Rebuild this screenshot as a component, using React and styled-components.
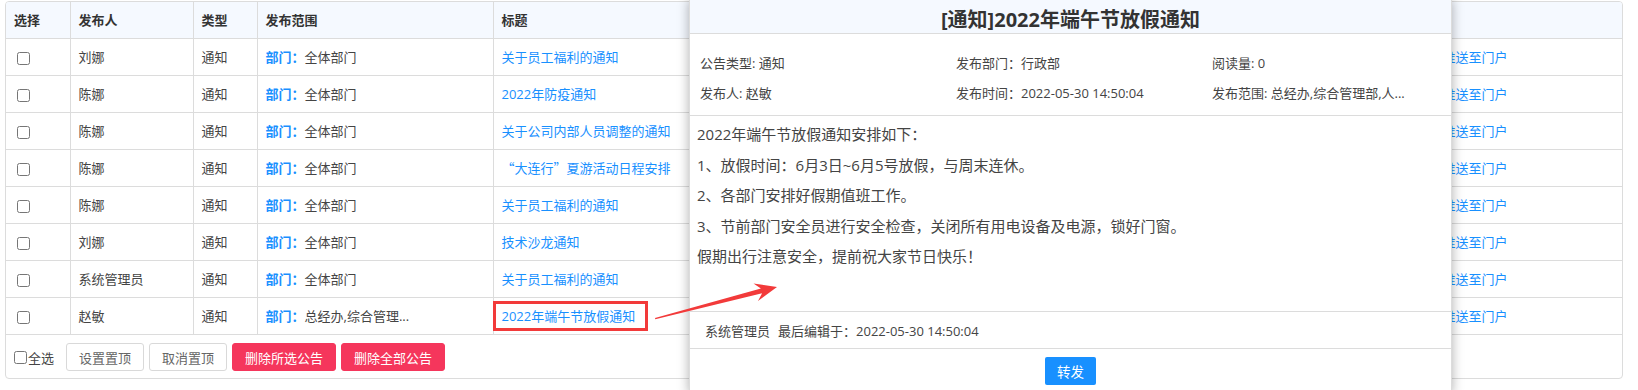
import styled, { createGlobalStyle } from "styled-components";

const GlobalStyle = createGlobalStyle`
  html, body {
    margin: 0;
    padding: 0;
    overflow: hidden;
    background: #fff;
    font-family: "Open Sans", "Noto Sans CJK SC", sans-serif;
    color: #444;
  }
`;

const Page = styled.div`
  position: relative;
  width: 1638px;
  height: 390px;
  padding: 1px 0 0 5px;
  box-sizing: border-box;
  overflow: hidden;
`;

const Panel = styled.div`
  width: 1618px;
  box-sizing: border-box;
  border: 1px solid #dcdcdc;
  border-radius: 4px;
  overflow: hidden;
`;

const Table = styled.table`
  width: 100%;
  border-collapse: collapse;
  table-layout: fixed;
  font-size: 13px;

  th,
  td {
    height: 36px;
    padding: 0 8px;
    border: 1px solid #dcdcdc;
    text-align: left;
    white-space: nowrap;
    overflow: hidden;
    line-height: 18px;
  }

  tr > *:first-child {
    border-left: none;
  }
  tr > *:last-child {
    border-right: none;
  }
  thead th {
    border-top: none;
  }
`;

const HeadRow = styled.tr`
  background: #f5f9ff;

  th {
    font-weight: bold;
    color: #333;
  }
`;

const Check = styled.input.attrs({ type: "checkbox" })`
  width: 13px;
  height: 13px;
  margin: 0 0 0 3px;
  vertical-align: middle;
`;

const Scope = styled.span`
  color: #1890ff;
  font-weight: bold;
`;

const Link = styled.a`
  color: #1890ff;
  text-decoration: none;
  cursor: pointer;
`;

const CjkMark = styled.span`
  font-family: "Noto Sans CJK SC", sans-serif;
`;

const Toolbar = styled.div`
  display: flex;
  align-items: center;
  gap: 5px;
  padding: 8px 8px 7px;
  font-size: 13px;
`;

const SelectAll = styled.label`
  display: flex;
  align-items: center;
  margin-right: 7px;
  color: #444;

  input {
    margin: 0 1px 0 0;
  }
`;

const Button = styled.button`
  height: 28px;
  padding: 0 12px;
  font-family: inherit;
  font-size: 13px;
  border-radius: 3px;
  cursor: pointer;
  border: 1px solid ${(p) => (p.$danger ? "#f5365c" : "#d9d9d9")};
  background: ${(p) => (p.$danger ? "#f5365c" : "#fff")};
  color: ${(p) => (p.$danger ? "#fff" : "#666")};
`;

const Highlight = styled.div`
  position: absolute;
  left: 493px;
  top: 301px;
  width: 155px;
  height: 30px;
  box-sizing: border-box;
  border: 3px solid #f23a3a;
  pointer-events: none;
`;

const Arrow = styled.svg`
  position: absolute;
  left: 0;
  top: 0;
  z-index: 3;
  pointer-events: none;
`;

const Modal = styled.div`
  position: absolute;
  left: 689px;
  top: 0;
  z-index: 2;
  width: 763px;
  box-sizing: border-box;
  background: #fff;
  border: 1px solid #dcdcdc;
  border-top: none;
  box-shadow: 0 0 11px rgba(0, 0, 0, 0.32);
  color: #444;
`;

const ModalTitle = styled.div`
  height: 34px;
  padding-top: 3px;
  box-sizing: border-box;
  display: flex;
  align-items: center;
  justify-content: center;
  background: #f5f9ff;
  border-bottom: 1px solid #dcdcdc;
  font-size: 20px;
  font-weight: bold;
  color: #333;
`;

const InfoGrid = styled.div`
  display: grid;
  grid-template-columns: 256px 256px 1fr;
  grid-auto-rows: 30px;
  align-items: center;
  padding: 13px 0 8px 10px;
  font-size: 13px;
  border-bottom: 1px solid #dcdcdc;
`;

const Content = styled.div`
  height: 196px;
  box-sizing: border-box;
  padding: 7px 7px;
  font-size: 15px;
  border-bottom: 1px solid #dcdcdc;

  p {
    margin: 0 0 8px;
    line-height: 22.5px;
  }
`;

const Footer = styled.div`
  height: 36px;
  display: flex;
  align-items: center;
  padding-left: 15px;
  font-size: 13px;
  border-bottom: 1px solid #dcdcdc;

  span + span {
    margin-left: 8px;
  }
`;

const Actions = styled.div`
  display: flex;
  justify-content: center;
  padding: 8px 0;
`;

const Forward = styled.button`
  height: 28px;
  padding: 0 12px;
  border: none;
  border-radius: 2px;
  background: #1890ff;
  color: #fff;
  font-family: inherit;
  font-size: 13.5px;
`;

const rows = [
  { name: "刘娜", scope: "全体部门", title: "关于员工福利的通知" },
  { name: "陈娜", scope: "全体部门", title: "2022年防疫通知" },
  { name: "陈娜", scope: "全体部门", title: "关于公司内部人员调整的通知" },
  { name: "陈娜", scope: "全体部门", title: "“大连行”夏游活动日程安排" },
  { name: "陈娜", scope: "全体部门", title: "关于员工福利的通知" },
  { name: "刘娜", scope: "全体部门", title: "技术沙龙通知" },
  { name: "系统管理员", scope: "全体部门", title: "关于员工福利的通知" },
  { name: "赵敏", scope: "总经办,综合管理...", title: "2022年端午节放假通知" },
];

// curly quotes take the full-width CJK glyphs, as in the original page
const Title = ({ text }) =>
  text.split(/([“”])/).map((part, i) =>
    part === "“" || part === "”" ? <CjkMark key={i}>{part}</CjkMark> : part
  );

// the columns under the dialog stay empty: only their borders would show
const widths = [64, 123, 64, 236, 420, 260, 261, 188];

export default function App() {
  return (
    <Page>
      <GlobalStyle />
      <Panel>
        <Table>
          <colgroup>
            {widths.map((w, i) => (
              <col key={i} style={{ width: w }} />
            ))}
          </colgroup>
          <thead>
            <HeadRow>
              <th>选择</th>
              <th>发布人</th>
              <th>类型</th>
              <th>发布范围</th>
              <th>标题</th>
              <th />
              <th />
              <th />
            </HeadRow>
          </thead>
          <tbody>
            {rows.map((r, i) => (
              <tr key={i}>
                <td>
                  <Check />
                </td>
                <td>{r.name}</td>
                <td>通知</td>
                <td>
                  <Scope>部门：</Scope>
                  {r.scope}
                </td>
                <td>
                  <Link>
                    <Title text={r.title} />
                  </Link>
                </td>
                <td />
                <td />
                <td>
                  <Link>推送至门户</Link>
                </td>
              </tr>
            ))}
          </tbody>
        </Table>
        <Toolbar>
          <SelectAll>
            <Check />
            全选
          </SelectAll>
          <Button>设置置顶</Button>
          <Button>取消置顶</Button>
          <Button $danger>删除所选公告</Button>
          <Button $danger>删除全部公告</Button>
        </Toolbar>
      </Panel>

      <Highlight />

      <Modal>
        <ModalTitle>[通知]2022年端午节放假通知</ModalTitle>
        <InfoGrid>
          <span>公告类型: 通知</span>
          <span>发布部门：行政部</span>
          <span>阅读量: 0</span>
          <span>发布人: 赵敏</span>
          <span>发布时间：2022-05-30 14:50:04</span>
          <span>发布范围: 总经办,综合管理部,人...</span>
        </InfoGrid>
        <Content>
          <p>2022年端午节放假通知安排如下：</p>
          <p>1、放假时间：6月3日~6月5号放假，与周末连休。</p>
          <p>2、各部门安排好假期值班工作。</p>
          <p>3、节前部门安全员进行安全检查，关闭所有用电设备及电源，锁好门窗。</p>
          <p>假期出行注意安全，提前祝大家节日快乐！</p>
        </Content>
        <Footer>
          <span>系统管理员</span>
          <span>最后编辑于：2022-05-30 14:50:04</span>
        </Footer>
        <Actions>
          <Forward>转发</Forward>
        </Actions>
      </Modal>

      <Arrow width="1638" height="390" viewBox="0 0 1638 390">
        <polygon
          points="655,318 760.9,288.5 753.5,283.5 777,287 758,301 762.1,293.3 655.3,319.2"
          fill="#f23a3a"
        />
      </Arrow>
    </Page>
  );
}
